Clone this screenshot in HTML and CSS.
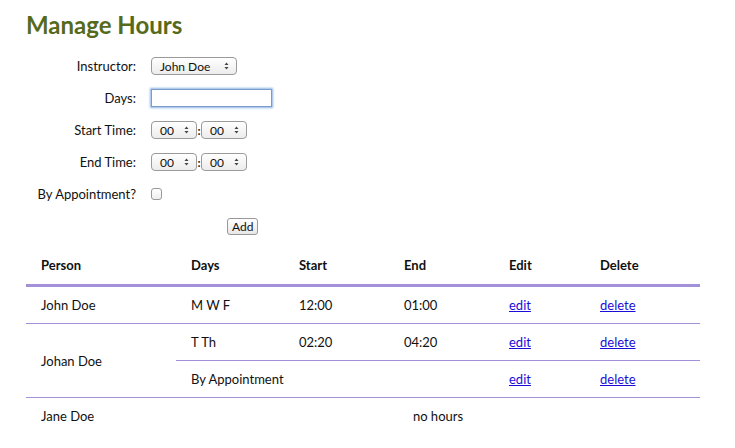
FILE: index.html
```html
<!DOCTYPE html>
<html>
<head>
<meta charset="utf-8">
<link rel="stylesheet" href="styles.css">
</head>
<body>
<h1 class="title">Manage Hours</h1>
<div class="form">
  <div class="label">Instructor:</div>
  <div class="field">
    <span class="select sel-instructor"><span class="val">John Doe</span><svg class="arrows" width="5" height="8" viewBox="0 0 5 8"><path d="M0.5 3 L2.5 0.5 L4.5 3 Z M0.5 5 L2.5 7.5 L4.5 5 Z" fill="#444"/></svg></span>
  </div>
  <div class="label">Days:</div>
  <div class="field"><span class="textbox"></span></div>
  <div class="label">Start Time:</div>
  <div class="field">
    <span class="select sel-time"><span class="val">00</span><svg class="arrows" width="5" height="8" viewBox="0 0 5 8"><path d="M0.5 3 L2.5 0.5 L4.5 3 Z M0.5 5 L2.5 7.5 L4.5 5 Z" fill="#444"/></svg></span><span class="colon">:</span><span class="select sel-time"><span class="val">00</span><svg class="arrows" width="5" height="8" viewBox="0 0 5 8"><path d="M0.5 3 L2.5 0.5 L4.5 3 Z M0.5 5 L2.5 7.5 L4.5 5 Z" fill="#444"/></svg></span>
  </div>
  <div class="label">End Time:</div>
  <div class="field">
    <span class="select sel-time"><span class="val">00</span><svg class="arrows" width="5" height="8" viewBox="0 0 5 8"><path d="M0.5 3 L2.5 0.5 L4.5 3 Z M0.5 5 L2.5 7.5 L4.5 5 Z" fill="#444"/></svg></span><span class="colon">:</span><span class="select sel-time"><span class="val">00</span><svg class="arrows" width="5" height="8" viewBox="0 0 5 8"><path d="M0.5 3 L2.5 0.5 L4.5 3 Z M0.5 5 L2.5 7.5 L4.5 5 Z" fill="#444"/></svg></span>
  </div>
  <div class="label">By Appointment?</div>
  <div class="field"><span class="checkbox"></span></div>
  <div class="label"></div>
  <div class="field"><span class="button">Add</span></div>
</div>
<table class="hours">
  <thead>
    <tr><th class="c-person">Person</th><th class="c-days">Days</th><th class="c-start">Start</th><th class="c-end">End</th><th class="c-edit">Edit</th><th class="c-del">Delete</th></tr>
  </thead>
  <tbody>
    <tr class="sep"><td>John Doe</td><td>M W F</td><td>12:00</td><td>01:00</td><td><a href="#">edit</a></td><td><a href="#">delete</a></td></tr>
    <tr class="sep"><td rowspan="2">Johan Doe</td><td>T Th</td><td>02:20</td><td>04:20</td><td><a href="#">edit</a></td><td><a href="#">delete</a></td></tr>
    <tr class="sep"><td>By Appointment</td><td></td><td></td><td><a href="#">edit</a></td><td><a href="#">delete</a></td></tr>
    <tr><td>Jane Doe</td><td colspan="5" class="none">no hours</td></tr>
  </tbody>
</table>
</body>
</html>
```
FILE: styles.css
```css
html, body {
  margin: 0;
  padding: 0;
  background: #fff;
}
body {
  font-family: "Lato", "DejaVu Sans", sans-serif;
  font-size: 13px;
  color: #111;
}
.title {
  margin: 0;
  padding: 10px 0 0 26px;
  font-size: 24px;
  line-height: 30px;
  font-weight: bold;
  color: #566a1c;
}
.form {
  display: grid;
  grid-template-columns: 136px auto;
  column-gap: 15px;
  grid-auto-rows: 32px;
  margin-top: 10px;
}
.label {
  text-align: right;
  display: flex;
  align-items: center;
  justify-content: flex-end;
}
.field {
  display: flex;
  align-items: center;
}
.select {
  display: inline-flex;
  align-items: center;
  justify-content: space-between;
  box-sizing: border-box;
  height: 18px;
  border: 1px solid #9a9a9a;
  border-radius: 4px;
  background: linear-gradient(#ffffff, #ececec);
  font-size: 12px;
  padding: 0 7px 0 8px;
}
.sel-instructor { width: 86px; }
.sel-time { width: 46px; }
.arrows { flex: none; }
.colon {
  width: 4px;
  text-align: center;
  font-weight: bold;
  font-size: 12px;
}
.textbox {
  display: inline-block;
  box-sizing: border-box;
  width: 121px;
  height: 18px;
  border: 1px solid #7a9cc8;
  box-shadow: 0 0 2px 1px #8db4e6;
  background: #fff;
}
.checkbox {
  display: inline-block;
  box-sizing: border-box;
  width: 11px;
  height: 12px;
  border: 1px solid #999;
  border-radius: 3px;
  background: linear-gradient(#fff, #eee);
}
.button {
  display: inline-flex;
  align-items: center;
  box-sizing: border-box;
  height: 17px;
  padding: 0 4px;
  margin-left: 76px;
  border: 1px solid #999;
  border-radius: 3px;
  background: linear-gradient(#fff, #e8e8e8);
  font-size: 12px;
}
.hours {
  margin: 3px 0 0 26px;
  width: 674px;
  border-collapse: collapse;
  table-layout: fixed;
}
.hours th, .hours td {
  text-align: left;
  padding: 0 0 0 15px;
  height: 36px;
  vertical-align: middle;
}
.hours th {
  height: 39px;
  font-weight: bold;
  border-bottom: 3px solid #a290d8;
}
.c-person { width: 135px; }
.c-days { width: 93px; }
.c-start { width: 90px; }
.c-end { width: 90px; }
.c-edit { width: 76px; }
.c-del { width: 100px; }
.hours tr.sep td {
  border-bottom: 1px solid #a290d8;
}
.hours td.none {
  text-align: center;
  padding-left: 0;
}
.hours a {
  color: #1a0dd8;
  text-decoration: underline;
}
```
